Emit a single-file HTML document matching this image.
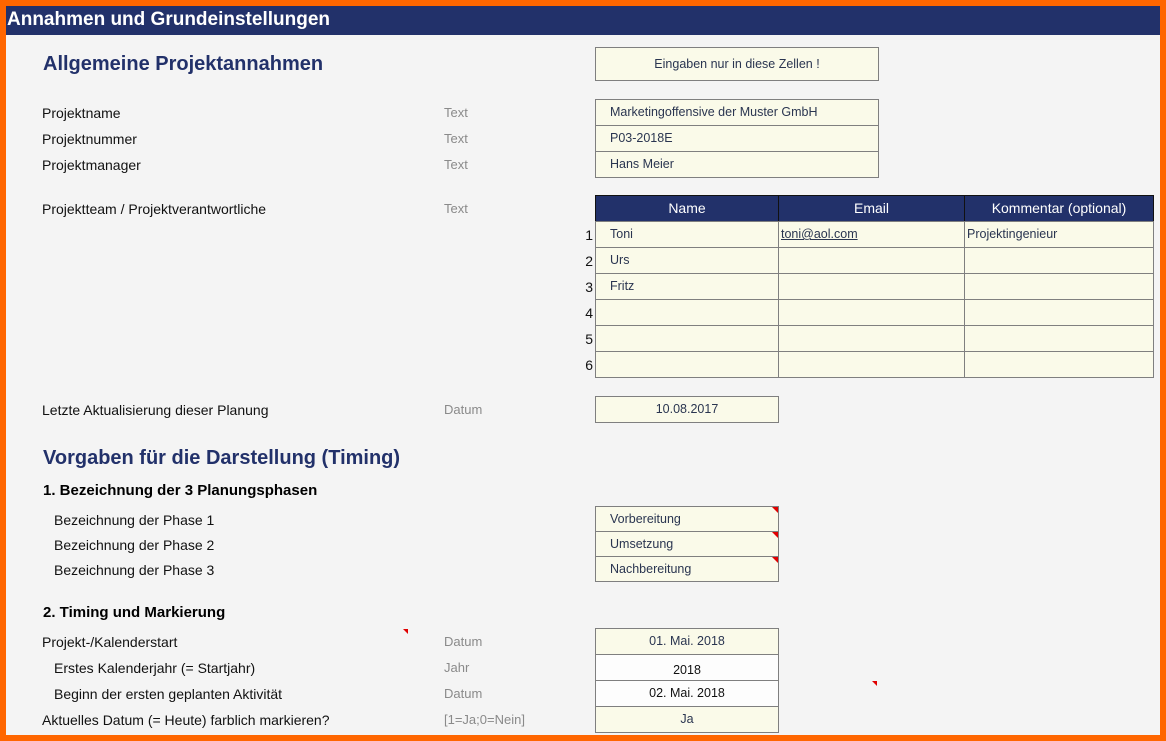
<!DOCTYPE html>
<html><head><meta charset="utf-8"><style>
*{margin:0;padding:0;box-sizing:border-box}
body{width:1166px;height:741px;background:#ff6600;position:relative;overflow:hidden;font-family:"Liberation Sans",Arial,sans-serif}
#pg{position:absolute;left:6px;top:6px;width:1154px;height:729px;background:#f4f4f4}
#hd{position:absolute;left:6px;top:6px;width:1154px;height:29px;background:#22316a;color:#fff;font-weight:bold;font-size:19px;line-height:27px;padding-left:1px}
.t{position:absolute;font-size:14px;color:#111;white-space:nowrap;line-height:16px}
.g{position:absolute;font-size:13px;color:#8a8a8a;white-space:nowrap;line-height:16px}
.h1{position:absolute;font-size:20px;font-weight:bold;color:#22316a;white-space:nowrap}
.h2{position:absolute;font-size:15px;font-weight:bold;color:#000;white-space:nowrap}
.c{position:absolute;background:#fafae9;border:1px solid #7f7f7f;font-size:12.5px;color:#2a3550;line-height:24px;padding-left:14px;white-space:nowrap}
.cc{text-align:center;padding-left:0}
.w{background:#fdfdfd;color:#111}
.th{position:absolute;background:#22316a;color:#fff;font-size:14px;text-align:center;line-height:25px;border:1px solid #111}
.n{position:absolute;font-size:14px;color:#111;width:12px;text-align:right}
.tri{position:absolute;width:0;height:0;border-top:6px solid #e00000;border-left:6px solid transparent}
</style></head><body>
<div id="pg"></div>
<div id="hd">Annahmen und Grundeinstellungen</div>

<div class="h1" style="left:43px;top:53px">Allgemeine Projektannahmen</div>
<div class="c cc" style="left:595px;top:47px;width:284px;height:34px;line-height:32px">Eingaben nur in diese Zellen !</div>

<div class="t" style="left:42px;top:105px">Projektname</div>
<div class="t" style="left:42px;top:131px">Projektnummer</div>
<div class="t" style="left:42px;top:157px">Projektmanager</div>
<div class="g" style="left:444px;top:105px">Text</div>
<div class="g" style="left:444px;top:131px">Text</div>
<div class="g" style="left:444px;top:157px">Text</div>
<div class="c" style="left:595px;top:99px;width:284px;height:27px">Marketingoffensive der Muster GmbH</div>
<div class="c" style="left:595px;top:125px;width:284px;height:27px">P03-2018E</div>
<div class="c" style="left:595px;top:151px;width:284px;height:27px">Hans Meier</div>

<div class="t" style="left:42px;top:201px">Projektteam / Projektverantwortliche</div>
<div class="g" style="left:444px;top:201px">Text</div>
<div class="th" style="left:595px;top:195px;width:184px;height:27px">Name</div>
<div class="th" style="left:778px;top:195px;width:187px;height:27px">Email</div>
<div class="th" style="left:964px;top:195px;width:190px;height:27px">Kommentar (optional)</div>

<div class="n" style="left:581px;top:227px">1</div>
<div class="n" style="left:581px;top:253px">2</div>
<div class="n" style="left:581px;top:279px">3</div>
<div class="n" style="left:581px;top:305px">4</div>
<div class="n" style="left:581px;top:331px">5</div>
<div class="n" style="left:581px;top:357px">6</div>

<div class="c" style="left:595px;top:221px;width:184px;height:27px">Toni</div>
<div class="c" style="left:778px;top:221px;width:187px;height:27px;padding-left:2px"><u>toni@aol.com</u></div>
<div class="c" style="left:964px;top:221px;width:190px;height:27px;padding-left:2px">Projektingenieur</div>
<div class="c" style="left:595px;top:247px;width:184px;height:27px">Urs</div>
<div class="c" style="left:778px;top:247px;width:187px;height:27px"></div>
<div class="c" style="left:964px;top:247px;width:190px;height:27px"></div>
<div class="c" style="left:595px;top:273px;width:184px;height:27px">Fritz</div>
<div class="c" style="left:778px;top:273px;width:187px;height:27px"></div>
<div class="c" style="left:964px;top:273px;width:190px;height:27px"></div>
<div class="c" style="left:595px;top:299px;width:184px;height:27px"></div>
<div class="c" style="left:778px;top:299px;width:187px;height:27px"></div>
<div class="c" style="left:964px;top:299px;width:190px;height:27px"></div>
<div class="c" style="left:595px;top:325px;width:184px;height:27px"></div>
<div class="c" style="left:778px;top:325px;width:187px;height:27px"></div>
<div class="c" style="left:964px;top:325px;width:190px;height:27px"></div>
<div class="c" style="left:595px;top:351px;width:184px;height:27px"></div>
<div class="c" style="left:778px;top:351px;width:187px;height:27px"></div>
<div class="c" style="left:964px;top:351px;width:190px;height:27px"></div>

<div class="t" style="left:42px;top:402px">Letzte Aktualisierung dieser Planung</div>
<div class="g" style="left:444px;top:402px">Datum</div>
<div class="c cc" style="left:595px;top:396px;width:184px;height:27px">10.08.2017</div>

<div class="h1" style="left:43px;top:447px">Vorgaben für die Darstellung (Timing)</div>
<div class="h2" style="left:43px;top:482px">1. Bezeichnung der 3 Planungsphasen</div>
<div class="t" style="left:54px;top:512px">Bezeichnung der Phase 1</div>
<div class="t" style="left:54px;top:537px">Bezeichnung der Phase 2</div>
<div class="t" style="left:54px;top:562px">Bezeichnung der Phase 3</div>
<div class="c" style="left:595px;top:506px;width:184px;height:26px">Vorbereitung</div>
<div class="c" style="left:595px;top:531px;width:184px;height:26px">Umsetzung</div>
<div class="c" style="left:595px;top:556px;width:184px;height:26px">Nachbereitung</div>
<div class="tri" style="left:772px;top:507px"></div>
<div class="tri" style="left:772px;top:532px"></div>
<div class="tri" style="left:772px;top:557px"></div>

<div class="h2" style="left:43px;top:604px">2. Timing und Markierung</div>
<div class="tri" style="left:403px;top:629px;border-top-width:5px;border-left-width:5px"></div>
<div class="tri" style="left:872px;top:681px;border-top-width:5px;border-left-width:5px"></div>
<div class="t" style="left:42px;top:634px">Projekt-/Kalenderstart</div>
<div class="t" style="left:54px;top:660px">Erstes Kalenderjahr (= Startjahr)</div>
<div class="t" style="left:54px;top:686px">Beginn der ersten geplanten Aktivität</div>
<div class="t" style="left:42px;top:712px">Aktuelles Datum (= Heute) farblich markieren?</div>
<div class="g" style="left:444px;top:634px">Datum</div>
<div class="g" style="left:444px;top:660px">Jahr</div>
<div class="g" style="left:444px;top:686px">Datum</div>
<div class="g" style="left:444px;top:712px">[1=Ja;0=Nein]</div>
<div class="c cc" style="left:595px;top:628px;width:184px;height:27px">01. Mai. 2018</div>
<div class="c cc w" style="left:595px;top:654px;width:184px;height:27px;line-height:30px">2018</div>
<div class="c cc w" style="left:595px;top:680px;width:184px;height:27px">02. Mai. 2018</div>
<div class="c cc" style="left:595px;top:706px;width:184px;height:27px">Ja</div>
</body></html>
